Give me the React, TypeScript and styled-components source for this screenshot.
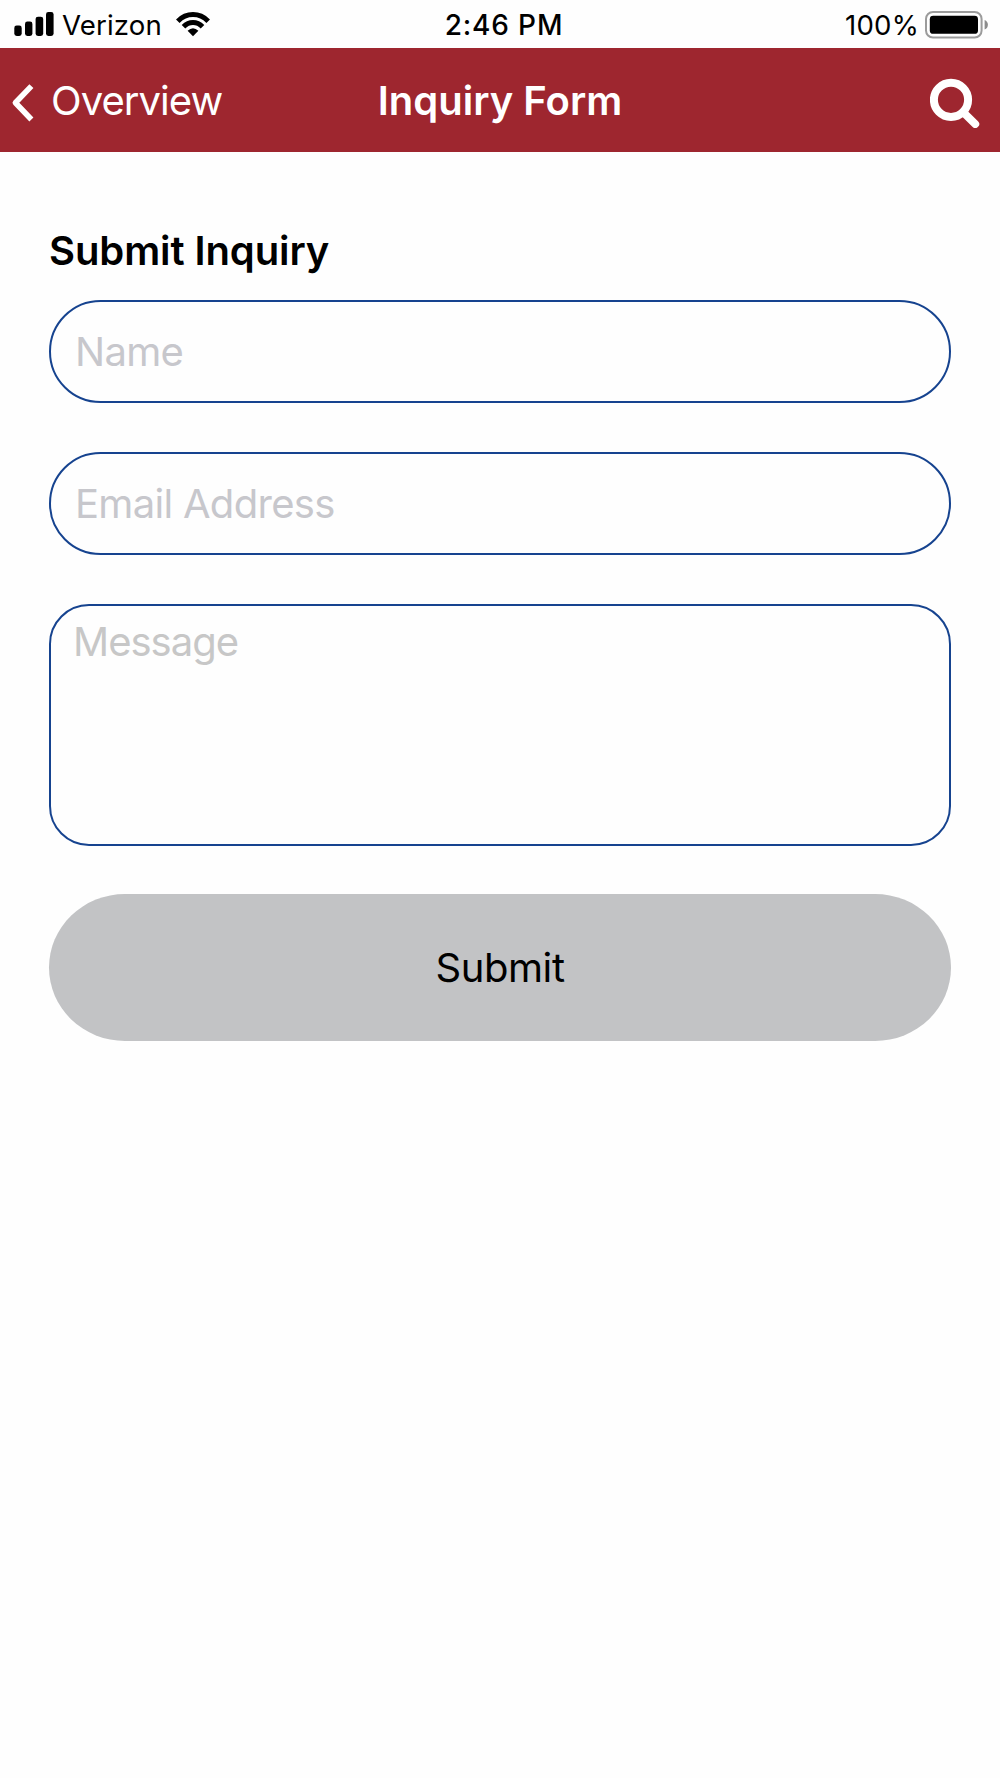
import React from "react";
import styled, { createGlobalStyle } from "styled-components";

const GlobalStyle = createGlobalStyle`
  *, *::before, *::after { box-sizing: border-box; }
  body {
    margin: 0;
    background: #fefefe;
    color: #000;
    font-family: Inter, "Liberation Sans", sans-serif;
  }
`;

const Screen = styled.div`
  display: flex;
  flex-direction: column;
  width: 1000px;
  min-height: 1778px;
`;

const TripleBar = styled.div`
  display: grid;
  grid-template-columns: 1fr auto 1fr;
  align-items: center;
`;

const StatusBar = styled(TripleBar)`
  height: 48px;
  padding: 1px 12px 0 14px;
  font-size: 27.6px;
  line-height: 34px;
`;

const NavBar = styled(TripleBar)`
  height: 104px;
  padding: 3px 20px 0 11px;
  background: #9e262f;
  color: #fff;
`;

const Side = styled.div<{ $end?: boolean }>`
  display: flex;
  align-items: center;
  justify-content: ${(p) => (p.$end ? "flex-end" : "flex-start")};
`;

const Label = styled.span<{ $spacing?: number }>`
  letter-spacing: ${(p) => p.$spacing ?? 0}px;
  white-space: nowrap;
`;

const Carrier = styled(Label)`
  margin: 0 14px 0 8px;
`;

const Clock = styled(Label)`
  padding: 1px 0 0 6px;
  font-size: 28px;
  font-weight: 550;
`;

const BatteryLevel = styled(Label)`
  padding-top: 1px;
  margin-right: 6px;
`;

const Icon = styled.svg`
  display: block;
  flex: none;
`;

const BackButton = styled.button`
  display: flex;
  align-items: center;
  gap: 16px;
  padding: 3px 0 0;
  border: 0;
  background: none;
  color: inherit;
  font: 400 40px/48px Inter, sans-serif;
`;

const BackLabel = styled(Label)`
  padding-bottom: 5px;
`;

const NavTitle = styled.h1`
  margin: 0;
  padding: 0 0 2px 9px;
  font-size: 40px;
  line-height: 48px;
  font-weight: 600;
  letter-spacing: 0;
`;

const IconButton = styled.button`
  padding: 3px 0 0;
  border: 0;
  background: none;
  color: inherit;
`;

const Form = styled.form`
  display: flex;
  flex-direction: column;
  padding: 75px 49px 0;
`;

const Heading = styled.h2`
  margin: 0 0 25px;
  font-size: 40px;
  line-height: 48px;
  font-weight: 600;
  letter-spacing: -0.1px;
`;

const Field = styled.input`
  height: 103px;
  margin: 0 0 49px;
  padding: 0 24px;
  border: 2px solid #16438f;
  border-radius: 52px;
  outline: 0;
  background: transparent;
  font: 400 40px/48px Inter, sans-serif;
  letter-spacing: -0.7px;
  &::placeholder { color: #c7c7cc; opacity: 1; }
`;

const MessageField = styled.textarea`
  height: 242px;
  margin: 0 0 48px;
  padding: 12px 22px;
  border: 2px solid #16438f;
  border-radius: 40px;
  outline: 0;
  resize: none;
  background: transparent;
  font: 400 40px/48px Inter, sans-serif;
  letter-spacing: -1px;
  &::placeholder { color: #c7c7c7; opacity: 1; }
`;

const SubmitButton = styled.button`
  height: 147px;
  padding: 1px 0 0;
  border: 0;
  border-radius: 76px / 73.5px;
  background: #c2c3c5;
  color: #000;
  font: 400 40px/48px Inter, sans-serif;
  letter-spacing: -0.4px;
`;

const SignalIcon = () => (
  <Icon width="40" height="26" viewBox="0 0 40 26">
    <rect x="0.3" y="13.5" width="7.4" height="10.5" rx="2.4" />
    <rect x="11" y="9.5" width="7.4" height="14.5" rx="2.4" />
    <rect x="21.6" y="4.7" width="7.6" height="19.3" rx="2.4" />
    <rect x="32" y="0" width="7.6" height="24" rx="2.4" />
  </Icon>
);

const WifiIcon = () => (
  <Icon width="34" height="26" viewBox="0 0 34 26" fill="none" stroke="#000" strokeWidth="5">
    <path d="M1.8 9.2C10.5 0.4 23.5 0.4 32.2 9.2" />
    <path d="M7.5 14.8C13 9.2 21 9.2 26.5 14.8" />
    <path d="M11.6 18.8Q17 13.8 22.4 18.8L17 24.2Z" fill="#000" stroke="none" />
  </Icon>
);

const BatteryIcon = () => (
  <Icon width="63" height="28" viewBox="0 0 63 28">
    <rect x="1" y="1" width="55.6" height="25.6" rx="7" fill="none" stroke="#9b9b9b" strokeWidth="2" />
    <rect x="4.8" y="4.8" width="48.2" height="18" rx="3.4" />
    <path d="M59.6 9C64 10.4 64 17.2 59.6 18.6Z" fill="#8c8c8c" />
  </Icon>
);

const ChevronIcon = () => (
  <Icon width="24" height="40" viewBox="0 0 24 40" fill="none" stroke="currentColor" strokeWidth="5.6">
    <path d="M20.4 3.1L4.4 19.8L20.4 36.5" strokeLinejoin="round" />
  </Icon>
);

const SearchIcon = () => (
  <Icon width="50" height="50" viewBox="0 0 50 50" fill="none" stroke="currentColor">
    <circle cx="21" cy="21.8" r="17.1" strokeWidth="8" />
    <path d="M34 35L45.2 46" strokeWidth="8" strokeLinecap="round" />
  </Icon>
);

export default function App() {
  return (
    <Screen>
      <GlobalStyle />
      <StatusBar>
        <Side>
          <SignalIcon />
          <Carrier $spacing={0.15}>Verizon</Carrier>
          <WifiIcon />
        </Side>
        <Clock $spacing={0.85}>2:46 PM</Clock>
        <Side $end>
          <BatteryLevel $spacing={0.2}>100%</BatteryLevel>
          <BatteryIcon />
        </Side>
      </StatusBar>
      <NavBar>
        <Side>
          <BackButton type="button">
            <ChevronIcon />
            <BackLabel $spacing={-0.95}>Overview</BackLabel>
          </BackButton>
        </Side>
        <NavTitle>Inquiry Form</NavTitle>
        <Side $end>
          <IconButton type="button" aria-label="Search">
            <SearchIcon />
          </IconButton>
        </Side>
      </NavBar>
      <Form>
        <Heading>Submit Inquiry</Heading>
        <Field placeholder="Name" />
        <Field placeholder="Email Address" />
        <MessageField placeholder="Message" />
        <SubmitButton type="button">Submit</SubmitButton>
      </Form>
    </Screen>
  );
}
